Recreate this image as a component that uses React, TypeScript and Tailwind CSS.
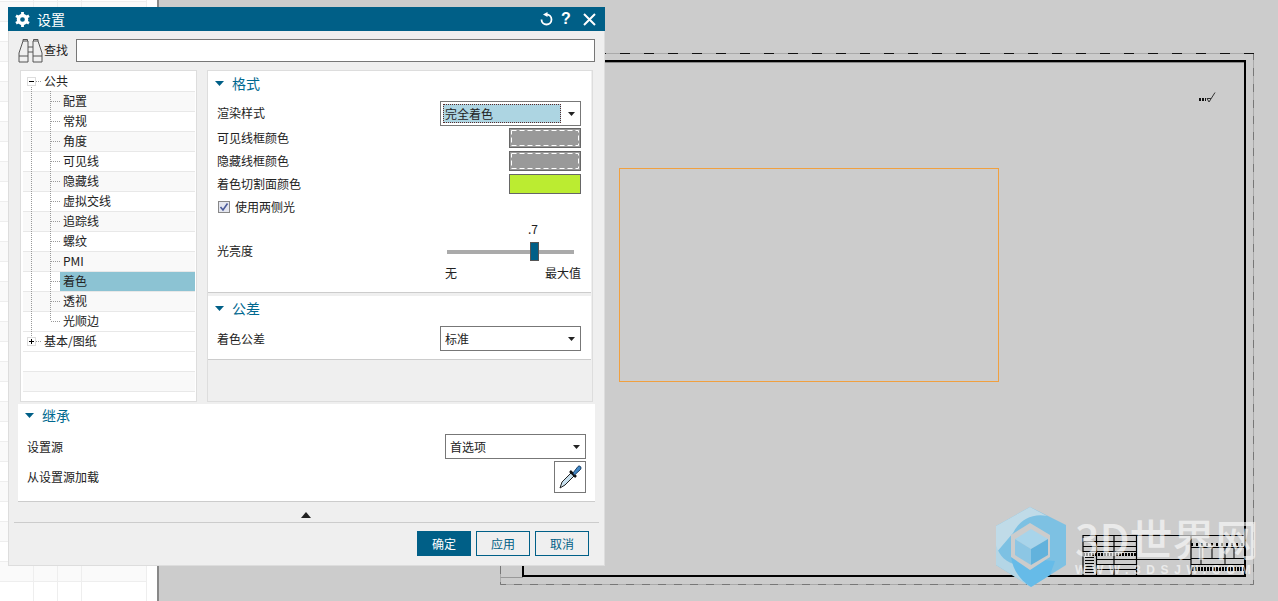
import React from 'react';

const treeItems = ['配置', '常规', '角度', '可见线', '隐藏线', '虚拟交线', '追踪线', '螺纹', 'PMI', '着色', '透视', '光顺边'];

const Caret = () => (
  <svg width="9" height="5" viewBox="0 0 9 5" className="shrink-0">
    <path d="M0 0H9L4.5 5Z" fill="#005f87" />
  </svg>
);

const SectionTitle = ({ text, className }: { text: string; className?: string }) => (
  <div className={`flex items-center -ml-[2px] pb-[4px] gap-[8px] text-[14px] text-[#00688f] ${className ?? 'h-[28px]'}`}>
    <Caret />
    <span>{text}</span>
  </div>
);

const Select = ({ value, active }: { value: string; active?: boolean }) => (
  <div className="flex items-center w-[141px] h-[25px] border border-[#777] bg-white pl-[2px] pr-[5px] justify-between">
    {active ? (
      <span className="flex items-center w-[118px] h-[19px] pl-[1px] bg-[#add5e2] border border-dotted border-[#5a2a2a]">{value}</span>
    ) : (
      <span className="pl-[2px]">{value}</span>
    )}
    <svg width="7" height="4" viewBox="0 0 7 4">
      <path d="M0 0H7L3.5 4Z" fill="#222" />
    </svg>
  </div>
);

const Swatch = ({ color, dashed }: { color: string; dashed?: boolean }) => (
  <div className={`w-[72px] h-[20px] border border-[#666] ${color}`}>
    {dashed && (
      <svg width="70" height="18" viewBox="0 0 70 18" fill="none" stroke="#fff">
        <rect x="1.5" y="1.5" width="67" height="15" strokeDasharray="5 3" />
      </svg>
    )}
  </div>
);

const FormRow = ({ label, className, children }: { label: string; className?: string; children: React.ReactNode }) => (
  <div className={`flex items-center justify-between ${className ?? ''}`}>
    <span>{label}</span>
    {children}
  </div>
);

const TreeBox = ({ open }: { open?: boolean }) => (
  <div className="relative w-[9px] h-[9px] border border-[#ddd] bg-white shrink-0">
    <div className="absolute left-[1px] top-[3px] w-[5px] h-px bg-black" />
    {!open && <div className="absolute left-[3px] top-[1px] w-px h-[5px] bg-black" />}
  </div>
);

const Tree = () => (
  <div className="relative w-[177px] h-[332px] border border-[#ddd] bg-white p-px overflow-hidden">
    <div className="ml-px">
      <div className="flex items-center h-[20px] pl-[4px] border-b border-[#e8e8e8]">
        <TreeBox open />
        <span className="ml-[8px] mb-[2px]">公共</span>
      </div>
      {treeItems.map((item, i) => (
        <div key={item} className={`flex items-center h-[20px] border-b border-[#e8e8e8] ${i % 2 === 0 ? 'bg-[#f9f9f9]' : ''}`}>
          <span className={`flex items-center h-full ml-[37px] pl-[3px] pb-[2px] flex-1 ${item === '着色' ? 'bg-[#8cc3d3]' : ''}`}>{item}</span>
        </div>
      ))}
      <div className="flex items-center h-[20px] pl-[4px] border-b border-[#e8e8e8]">
        <TreeBox />
        <span className="ml-[8px] mb-[2px]">基本/图纸</span>
      </div>
      <div className="h-[20px] border-b border-[#e8e8e8]" />
      <div className="h-[20px] border-b border-[#e8e8e8] bg-[#f9f9f9]" />
    </div>
    {/* connector dots */}
    <svg className="absolute left-0 top-0" width="60" height="300" viewBox="0 0 60 300" fill="none" stroke="#999" strokeDasharray="1 1">
      <path d="M10.5 16V265M29.5 20V250" />
      {treeItems.map((_, i) => (
        <path key={i} d={`M30 ${30.5 + i * 20}H39`} />
      ))}
      <path d="M15 10.5H20M15 270.5H20" />
    </svg>
  </div>
);

const Binoculars = () => (
  <svg width="25" height="24" viewBox="0 0 25 24" fill="none" stroke="#555" strokeWidth="1">
    <path d="M1 23V14L5 2H10V23ZM1 17H10M5 2V0.5H9.5V2" />
    <path d="M24 23V14L20 2H15V23ZM24 17H15M20 2V0.5H15.5V2" />
    <path d="M10 8H15M10 13H15" />
  </svg>
);

const Gear = () => (
  <svg width="15" height="15" viewBox="0 0 14 14">
    <circle cx="7" cy="7" r="3.8" fill="none" stroke="#fff" strokeWidth="3.2" />
    <path d="M7 0V14M0.94 3.5L13.06 10.5M13.06 3.5L0.94 10.5" stroke="#fff" strokeWidth="2.6" strokeDasharray="2.4 9.2 2.4" />
  </svg>
);

const Dropper = () => (
  <svg width="24" height="24" viewBox="0 0 24 24">
    <path d="M2 23L4 17L14 7L17 10L7 20Z" fill="#c8e0ee" stroke="#222" strokeWidth="1" />
    <path d="M12 6L18 12" stroke="#111" strokeWidth="2.5" />
    <path d="M15 8L20 1.5C21 0.5 23 1 23 3C23 4 22.5 4.5 22 5L16.5 10Z" fill="#3f86c4" stroke="#1b3f66" strokeWidth="1" />
  </svg>
);

const Dialog = () => (
  <div className="absolute left-[8px] top-[7px] w-[597px] h-[559px] flex flex-col bg-[#efefef] border-l border-b border-r border-[#ddd] text-[12px] leading-none text-[#222] font-['Noto_Sans_CJK_SC','Noto_Sans',sans-serif]">
    {/* title bar */}
    <div className="flex items-center justify-between h-[24px] bg-[#005f87] text-white pl-[7px] pr-[9px] -mx-px shrink-0">
      <div className="flex items-center gap-[7px]">
        <Gear />
        <span className="text-[14px]">设置</span>
      </div>
      <div className="flex items-center">
        <svg width="13" height="14" viewBox="0 0 13 14" fill="none" stroke="#fff" strokeWidth="1.8">
          <path d="M6.5 2.5A5 5 0 1 1 1.5 7.5" />
          <path d="M3 2.5L7.5 0V5Z" strokeWidth="0" fill="#fff" />
        </svg>
        <span className="ml-[8px] w-[9px] text-[16px] font-bold font-['Liberation_Sans',sans-serif]">?</span>
        <svg className="ml-[13px]" width="13" height="13" viewBox="0 0 13 13" stroke="#fff" strokeWidth="2">
          <path d="M1 1L12 12M12 1L1 12" />
        </svg>
      </div>
    </div>

    {/* search */}
    <div className="flex items-center h-[39px] pl-[9px] pr-[9px] shrink-0">
      <Binoculars />
      <span className="ml-[1px] w-[32px] mb-[2px]">查找</span>
      <div className="flex-1 h-[23px] bg-white border border-[#777]" />
    </div>

    {/* tree and settings */}
    <div className="flex h-[332px] pl-[11px] gap-[10px] shrink-0">
      <Tree />
      <div className="w-[386px] h-[332px] flex flex-col border border-[#ddd]">
        <div className="h-[222px] mr-px pl-[9px] pr-[10px] bg-white border-b border-[#ccc] shrink-0">
          <SectionTitle text="格式" />
          <FormRow label="渲染样式" className="mt-[2px] [&>span]:mb-[2px]">
            <Select value="完全着色" active />
          </FormRow>
          <FormRow label="可见线框颜色" className="mt-[2px]">
            <Swatch color="bg-[#999]" dashed />
          </FormRow>
          <FormRow label="隐藏线框颜色" className="mt-[3px]">
            <Swatch color="bg-[#999]" dashed />
          </FormRow>
          <FormRow label="着色切割面颜色" className="mt-[3px]">
            <Swatch color="bg-[#bbec31]" />
          </FormRow>
          <div className="flex items-center h-[20px] mt-[3px] pl-px gap-[5px]">
            <div className="flex items-center justify-center w-[12px] h-[12px] border border-[#888] bg-[#e4e6ef]">
              <svg width="10" height="10" viewBox="0 0 10 10" fill="none" stroke="#4a5a9a" strokeWidth="1.6">
                <path d="M1.5 5L4 8L8.5 1.5" />
              </svg>
            </div>
            <span>使用两侧光</span>
          </div>
          <div className="flex items-center justify-between mt-[5px] h-[60px]">
            <span className="mb-[2px]">光亮度</span>
            <div className="w-[136px] h-[60px]">
              <div className="h-[16px] pl-[83px] -mt-px text-[12px] leading-[16px]">.7</div>
              <div className="relative h-[26px] mt-[2px] mx-[2px] flex items-center">
                <div className="w-[127px] h-[4px] bg-[#aaa]" />
                <div className="absolute left-[83px] top-[3px] w-[9px] h-[19px] bg-[#005f87] border border-[#555]" />
              </div>
              <div className="flex justify-between h-[15px] items-center">
                <span>无</span>
                <span>最大值</span>
              </div>
            </div>
          </div>
        </div>
        <div className="h-[64px] mt-[3px] mr-px pl-[9px] pr-[10px] bg-white border-b border-[#ccc] shrink-0">
          <SectionTitle text="公差" />
          <FormRow label="着色公差" className="mt-[2px]">
            <Select value="标准" />
          </FormRow>
        </div>
      </div>
    </div>

    {/* inherit */}
    <div className="h-[98px] mt-[2px] mx-[9px] pl-[9px] pr-[9px] bg-white border-b border-[#ccc] shrink-0">
      <SectionTitle text="继承" className="h-[26px]" />
      <FormRow label="设置源" className="mt-[4px]">
        <Select value="首选项" />
      </FormRow>
      <FormRow label="从设置源加载" className="mt-[2px]">
        <div className="flex items-center justify-center w-[32px] h-[32px] border border-[#777] bg-white">
          <Dropper />
        </div>
      </FormRow>
    </div>

    {/* collapse arrow */}
    <div className="flex items-center justify-center h-[21px] mx-[5px] border-b border-[#ccc] shrink-0">
      <svg width="10" height="6" viewBox="0 0 10 6" className="mt-[5px] mr-[2px]">
        <path d="M0 6H10L5 0Z" fill="#222" />
      </svg>
    </div>

    {/* buttons */}
    <div className="flex justify-end gap-[5px] pt-[8px] pr-[15px]">
      <div className="flex items-center justify-center w-[54px] h-[25px] bg-[#005f87] text-white">确定</div>
      <div className="flex items-center justify-center w-[54px] h-[25px] border border-[#005f87] text-[#005f87]">应用</div>
      <div className="flex items-center justify-center w-[54px] h-[25px] border border-[#005f87] text-[#005f87]">取消</div>
    </div>
  </div>
);

const SheetCols = () => (
  <>
    <div className="w-[34px] border-r border-[#eee]" />
    <div className="w-[24px] border-r border-[#eee]" />
    <div className="w-[24px] border-r border-[#eee]" />
  </>
);

const Sheet = () => (
  <div className="w-[147px] h-full bg-white border-r border-[#eee] shrink-0 overflow-hidden">
    <div className="flex h-[2px] border-b border-[#eee]">
      <SheetCols />
    </div>
    {Array.from({ length: 30 }).map((_, i) => (
      <div key={i} className={`flex h-[20px] border-b border-[#eee] ${i % 2 === 0 ? 'bg-[#fafafa]' : 'bg-white'}`}>
        <SheetCols />
      </div>
    ))}
  </div>
);

// drawing frame with title block, coordinates relative to the grey canvas
const Drawing = () => (
  <svg className="absolute left-0 top-0" width="1119" height="601" viewBox="0 0 1119 601" fill="none">
    <rect x="341.5" y="53.5" width="753" height="531" stroke="#aaa" />
    <path d="M341 53.5H1095" stroke="#111" strokeDasharray="10 14" />
    <path d="M341.5 54V584.5H1094.5V54" stroke="#777" strokeDasharray="8 8" />
    <path d="M341.5 577.5H364" stroke="#999" />
    <path d="M364 62.5H1086" stroke="#888" strokeWidth="1" />
    <rect x="364" y="61" width="722" height="515" stroke="#000" strokeWidth="2" />
    <rect x="460.5" y="168.5" width="379" height="213" stroke="#f0a040" />
    <path d="M1040 99.5H1047" stroke="#111" strokeWidth="3" strokeDasharray="2 1" />
    <path d="M1048 98.5L1050 102L1056 92.5M1048 98.5H1052" stroke="#333" />
    {/* title block */}
    <g stroke="#000" strokeWidth="1">
      <path d="M924 535.5H1086M924 535V576M937.5 535V576M955 535V576M977.5 535V576M1032 535V576" strokeWidth="1.2" />
      <path d="M924 541.5H977M924 546.5H977M924 551.5H977M937 559.5H977M937 564.5H977M937 569.5H977" />
      <path d="M924 554.5H977" strokeWidth="3" strokeDasharray="2 1" />
      <path d="M930.5 557V576" strokeWidth="9" strokeDasharray="1 2" />
      <path d="M977 559.5H1032M1032 547.5H1086M1032 558.5H1086M1032 564.5H1086" />
      <path d="M1042 547V564M1053 547V558M1066 547V564M1075 547V558" />
      <path d="M1032 544.5H1086" strokeWidth="3" strokeDasharray="2 3" />
      <path d="M1033 569H1085" strokeWidth="4" strokeDasharray="2 1" />
    </g>
  </svg>
);

const Watermark = () => (
  <div className="absolute left-[836px] top-[505px] flex items-start font-['Noto_Sans_CJK_SC',sans-serif] text-white/60">
    <svg width="72" height="83" viewBox="0 0 72 83">
      <path d="M35 2L71 20V60L36 82L1 60V21Z" fill="#74c0e6" opacity="0.9" />
      <path d="M35 2L52 11C36 8 24 16 18 28L1 48V21Z" fill="#c0dbe8" />
      <path d="M1 40C6 58 22 66 55 57L36 82L1 60Z" fill="#b4d6e6" />
      <path d="M16 52C18 66 26 76 36 82L55 70L60 56Z" fill="#66bbe8" />
      <path d="M35 18L55 30V52L35 65L16 52V30Z" fill="#ccc" />
      <path d="M36 24L53 34L36 44L20 34Z" fill="#a8d4ea" />
      <path d="M20 34L36 44V60L20 50Z" fill="#8cc6e4" />
      <path d="M53 34L36 44V60L53 50Z" fill="#62b2dc" />
    </svg>
    <div className="ml-[8px] pt-[10px] flex flex-col items-start">
      <div className="text-[43px] leading-[44px] whitespace-nowrap font-medium">3D世界网</div>
      <div className="mt-[4px] text-[12px] leading-[14px] tracking-[5.6px] whitespace-nowrap font-bold font-['Liberation_Sans',sans-serif]">WWW.3DSJW.COM</div>
    </div>
  </div>
);

export default function App() {
  return (
    <div className="relative flex w-[1278px] h-[601px] overflow-hidden bg-white">
      <Sheet />
      <div className="w-[10px] shrink-0" />
      <div className="w-[2px] bg-[#888] shrink-0" />
      <div className="relative flex-1 bg-[#cccccc]">
        <Drawing />
        <Watermark />
      </div>
      <Dialog />
    </div>
  );
}
